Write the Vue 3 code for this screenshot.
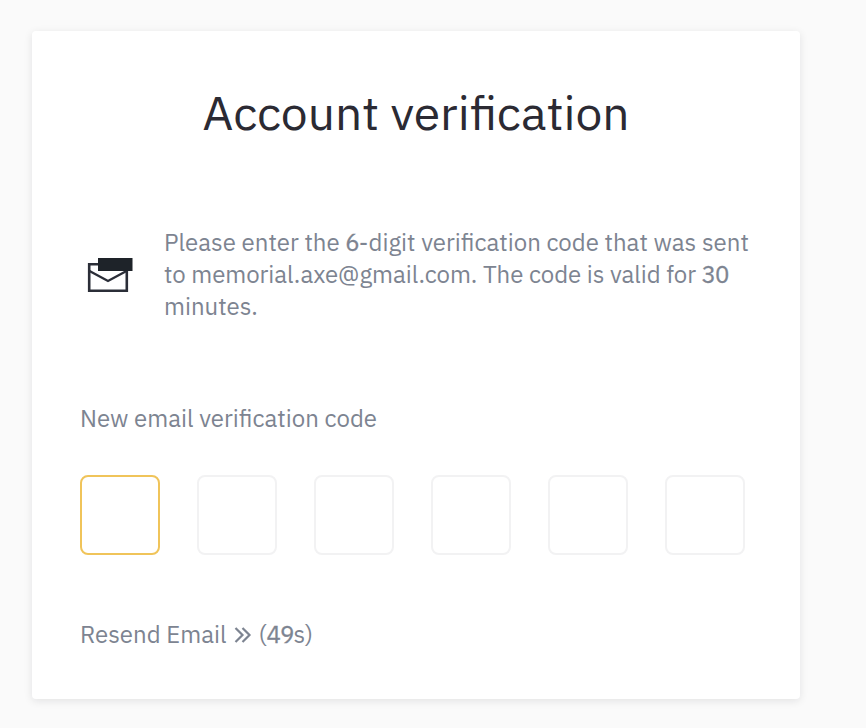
<script setup>
import { ref } from 'vue'

const email = 'memorial.axe@gmail.com'
const seconds = ref(49)
const digits = ref(['', '', '', '', '', ''])
const activeIndex = ref(0)
const inputs = ref([])

const handleInput = (event, index) => {
  const value = event.target.value.replace(/\D/g, '').slice(-1)
  digits.value[index] = value
  event.target.value = value
  if (value && index < digits.value.length - 1) {
    inputs.value[index + 1].focus()
  }
}

const handleBackspace = (index) => {
  if (!digits.value[index] && index > 0) {
    inputs.value[index - 1].focus()
  }
}
</script>

<template>
  <main class="page">
    <section class="card">
      <h1>Account verification</h1>

      <div class="notice">
        <svg class="mail-icon" viewBox="0 0 48 36" width="48" height="36">
          <path d="M3.2 7.2H40.8V33.8H3.2Z" fill="none" stroke="#2b2e38" stroke-width="2.6" />
          <path d="M3.5 14L22 24L40.5 14" fill="none" stroke="#2b2e38" stroke-width="2.4" />
          <path d="M12 1H46.5V14H12Z" fill="#1e2329" />
        </svg>
        <p>
          Please enter the <span class="number">6</span>-digit verification code that was sent<br />
          <span class="address-line">to {{ email }}. The code is valid for <span class="number">30</span></span><br />
          minutes.
        </p>
      </div>

      <label class="code-label" for="code-0">New email verification code</label>
      <div class="code-inputs">
        <input
          v-for="(digit, index) in digits"
          :id="'code-' + index"
          :key="index"
          ref="inputs"
          :value="digit"
          :class="{ active: activeIndex === index }"
          type="text"
          inputmode="numeric"
          @focus="activeIndex = index"
          @input="handleInput($event, index)"
          @keydown.backspace="handleBackspace(index)"
        />
      </div>

      <button type="button" class="resend" :disabled="seconds > 0">
        <span>Resend Email</span>
        <svg viewBox="0 0 18 18" width="18" height="18">
          <path d="M1.5 2L8.5 9L1.5 16M8.5 2L15.5 9L8.5 16" fill="none" stroke="currentColor" stroke-width="2.2" />
        </svg>
        <span>(<span class="number">{{ seconds }}</span>s)</span>
      </button>
    </section>
  </main>
</template>

<style>
body {
  margin: 0;
  background-color: #fafafa;
}
</style>

<style scoped>
.page {
  box-sizing: border-box;
  height: 728px;
  padding: 31px 0 0 32px;
  overflow: hidden;
  background-color: #fafafa;
  color: #7d8491;
  font-family: "IBM Plex Sans", Roboto, "Liberation Sans", sans-serif;
  font-size: 24px;
  line-height: 32px;
}

.card {
  box-sizing: border-box;
  width: 768px;
  height: 668px;
  padding: 48px;
  background-color: #fff;
  border-radius: 4px;
  box-shadow: 0 2px 8px rgba(20, 21, 26, 0.1);
}

h1 {
  margin: 0;
  color: #2b2a33;
  font-size: 48px;
  font-weight: 400;
  line-height: 66px;
  text-align: center;
  white-space: nowrap;
}

.notice {
  display: flex;
  align-items: center;
  gap: 30px;
  margin-top: 81px;
  padding-left: 6px;
}

.mail-icon {
  flex: none;
  margin-top: 2px;
}

.notice p {
  margin: 0;
  white-space: nowrap;
}

.address-line {
  letter-spacing: -0.05px;
}

.number {
  letter-spacing: -1px;
  -webkit-text-stroke: 0.3px currentColor;
}

.code-label {
  display: block;
  margin-top: 80px;
}

.code-inputs {
  display: flex;
  justify-content: space-between;
  width: 665px;
  margin-top: 41px;
}

.code-inputs input {
  box-sizing: border-box;
  width: 80px;
  height: 80px;
  padding: 0;
  border: 2px solid #f2f2f3;
  border-radius: 8px;
  outline: none;
  background-color: #fff;
  color: #1e2329;
  font: inherit;
  font-size: 32px;
  text-align: center;
}

.code-inputs input.active {
  border-color: #f0c45a;
}

.resend {
  display: flex;
  align-items: center;
  margin-top: 63px;
  padding: 0;
  border: none;
  background: none;
  color: inherit;
  font: inherit;
}

.resend svg {
  margin: 1px 7px 0 7px;
}
</style>
